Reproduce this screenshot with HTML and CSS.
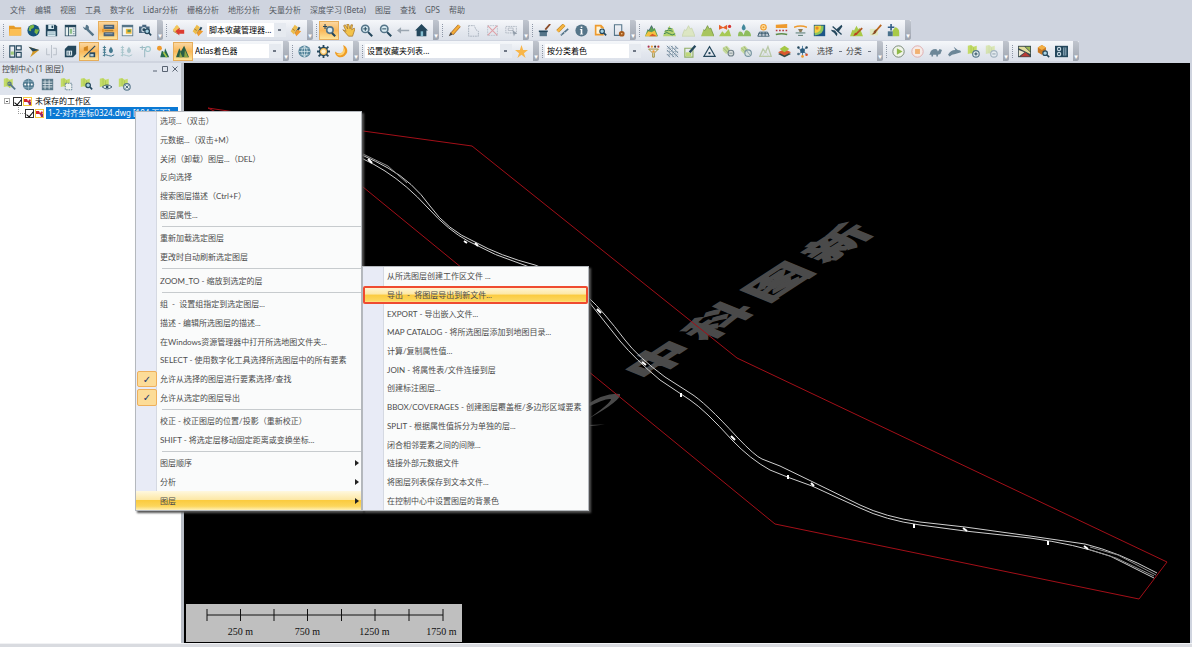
FILE: index.html
```html
<!DOCTYPE html>
<html lang="zh-CN">
<head>
    <meta charset="UTF-8">
    <meta name="viewport" content="width=device-width, initial-scale=1.0">
    <title>控制中心</title>
    <link rel="stylesheet" href="styles.css">
</head>
<body>
    <nav class="menubar">
        <button>文件</button>
        <button>编辑</button>
        <button>视图</button>
        <button>工具</button>
        <button>数字化</button>
        <button>Lidar分析</button>
        <button>栅格分析</button>
        <button>地形分析</button>
        <button>矢量分析</button>
        <button>深度学习 (Beta)</button>
        <button>图层</button>
        <button>查找</button>
        <button>GPS</button>
        <button>帮助</button>
    </nav>

    <div class="toolbar-row">
        <div class="toolbar bar-file" data-icons="folder globe save layout wrench layers:on window camera"></div>
        <div class="toolbar bar-script">
            <span class="tools" data-icons="scriptRun scriptEdit"></span>
            <select class="combo" aria-label="脚本"><option>脚本收藏管理器...</option></select>
            <span class="tools one" data-icons="scriptEdit"></span>
        </div>
        <div class="toolbar bar-view" data-icons="zoomTool:on hand zoomIn zoomOut back home"></div>
        <div class="toolbar bar-edit" data-icons="pencil selectShape deleteX selectBox"></div>
        <div class="toolbar bar-info" data-icons="brushCan ruler info pageFind pageGear"></div>
        <div class="toolbar bar-terrain" data-icons="terrainColor terrainLine terrainPale terrainGreen terrainFlag terrainWater sunGrid bandOrange plateau heatmap plane terrainBrush brush terrainAdd"></div>
    </div>

    <div class="toolbar-row">
        <div class="toolbar bar-shader">
            <span class="tools" data-icons="panes compass mirror cube percent:on wellBlue wellPale wellTop terrainSun terrainDark:on"></span>
            <select class="combo" aria-label="着色器"><option>Atlas着色器</option></select>
        </div>
        <div class="toolbar bar-globe" data-icons="gridGlobe gearSun moon"></div>
        <div class="toolbar bar-favorite">
            <select class="combo" aria-label="收藏夹"><option>设置收藏夹列表...</option></select>
            <span class="tools one" data-icons="star"></span>
        </div>
        <div class="toolbar bar-lidar">
            <select class="combo" aria-label="着色"><option>按分类着色</option></select>
            <span class="tools" data-icons="filter hatch picker triangle cloudA cloudB cloudC diamond points"></span>
            <button class="drop">选择</button>
            <button class="drop">分类</button>
        </div>
        <div class="toolbar bar-play" data-icons="play stop turtle rabbit mapAdd mapMinus"></div>
        <div class="toolbar bar-extra" data-icons="mosaic cubeFind switches"></div>
    </div>

    <main class="workspace">
        <aside class="control-center">
            <header class="panel-title">
                <h1>控制中心 (1 图层)</h1>
                <button aria-label="最小化"><svg viewBox="0 0 8 8"><path d="M2 6h4"/></svg></button>
                <button aria-label="最大化"><svg viewBox="0 0 8 8"><path d="M1.500 1.500h5v5h-5z"/></svg></button>
                <button aria-label="关闭"><svg viewBox="0 0 8 8"><path d="M1.500 1.500l5 5M6.500 1.500l-5 5"/></svg></button>
            </header>
            <div class="panel-tools" data-icons="mapWrench dotsGlobe table mapSelect mapFind mapEye mapClose"></div>
            <div class="tree">
                <div class="tree-row root">
                    <span class="expander"></span>
                    <input type="checkbox" id="workspace" checked>
                    <svg class="layer-icon" viewBox="0 0 9 9"><path fill="#f4c93c" d="M0 0h9v9H0z"/><path fill="#fff" d="M1 1h7v7H1z"/><path fill="#d3222f" d="M1 2h3l1 2 2-2 1 2-2 2-2-1-3 0z"/><path fill="#8b2a70" d="M5 5h3v3H6z"/></svg>
                    <label for="workspace">未保存的工作区</label>
                </div>
                <div class="tree-row child">
                    <input type="checkbox" id="layer" checked>
                    <svg class="layer-icon" viewBox="0 0 9 9"><path fill="#f4c93c" d="M0 0h9v9H0z"/><path fill="#fff" d="M1 1h7v7H1z"/><path fill="#d3222f" d="M1 2h3l1 2 2-2 1 2-2 2-2-1-3 0z"/><path fill="#8b2a70" d="M5 5h3v3H6z"/></svg>
                    <label for="layer" class="selected">1-2-对齐坐标0324.dwg [184 页面]</label>
                </div>
            </div>
        </aside>

        <section class="map">
            <svg class="drawing" viewBox="184 63 1006 580" preserveAspectRatio="xMinYMin slice">
                <!-- watermark -->
                <g class="watermark">
                    <path d="M586 405Q606 392 620 394Q622 400 588 419Q611 403 611 399Q605 398 586 408z"/>
                    <path d="M586 425l19-.5-19 2z"/>
                    <text transform="matrix(1.15 -.75 .78 .32 671 365)" x="0 52 104 156">中科图新</text>
                </g>
                <!-- boundary -->
                <path class="boundary" d="M208 108L363 131 472 146 737 358 1167 562 1139 599 775 524 363 187z"/>
                <!-- route -->
                <g class="route">
                    <path d="M340 147Q363 154 388 168T430 206 475 242Q500 256 535 265 565 275 589 298 603 311 625 340 638 357 665 377L690 393Q705 402 737 437 755 456 762 459L780 466 813 482 860 505Q885 517 920 522L965 527 1030 536 1085 544Q1118 552 1157 573"/>
                    <path d="M340 150Q363 157 385 171T428 208 468 241Q495 256 524 265 562 277 589 302L620 341Q636 360 660 380L690 400Q705 410 732 440 750 459 770 470L790 478 812 486 860 508Q885 520 920 525L965 531 1030 538Q1075 544 1110 556L1154 578"/>
                    <path class="fine" d="M363 154L388 166 407 183M1090 547l28 8 38 20M1090 550l26 8 38 18"/>
                </g>
                <path class="stations" d="M368 159l4 4M464 241l3 2M475 243l3 3M597 309l4 4M642 362l4 3M681 393v4M731 436l4 4M788 475v4M811 483l3 3M914 524v4M963 528l4 3M1048 541v4M1084 546l4 3"/>
            </svg>

            <div class="scale">
                <svg viewBox="0 0 276 22"><path d="M23 11h236M23 5v12M56.500 5v12M90 5v12M123.500 5v12M157.500 5v12M191 5v12M225 5v12M259 5v12" transform="translate(-2)"/></svg>
                <div class="scale-labels">
                    <span>250 m</span>
                    <span>750 m</span>
                    <span>1250 m</span>
                    <span>1750 m</span>
                </div>
            </div>
        </section>
    </main>
    <footer class="statusbar"></footer>

    <div class="menu context-menu">
        <button>选项...（双击）</button>
        <button>元数据...（双击+M）</button>
        <button>关闭（卸载）图层...（DEL）</button>
        <button>反向选择</button>
        <button>搜索图层描述（Ctrl+F）</button>
        <button>图层属性...</button>
        <hr>
        <button>重新加载选定图层</button>
        <button>更改时自动刷新选定图层</button>
        <hr>
        <button>ZOOM_TO - 缩放到选定的层</button>
        <hr>
        <button>组  -  设置组指定到选定图层...</button>
        <button>描述 - 编辑所选图层的描述...</button>
        <button>在Windows资源管理器中打开所选地图文件夹...</button>
        <button>SELECT - 使用数字化工具选择所选图层中的所有要素</button>
        <button class="checked">允许从选择的图层进行要素选择/查找</button>
        <button class="checked">允许从选定的图层导出</button>
        <hr>
        <button>校正 - 校正图层的位置/投影（重新校正）</button>
        <button>SHIFT - 将选定层移动固定距离或变换坐标...</button>
        <hr>
        <button class="has-submenu">图层顺序</button>
        <button class="has-submenu">分析</button>
        <button class="has-submenu active">图层</button>
    </div>

    <div class="menu submenu">
        <button>从所选图层创建工作区文件 ...</button>
        <button class="active outlined">导出  -  将图层导出到新文件...</button>
        <button>EXPORT - 导出嵌入文件...</button>
        <button>MAP CATALOG - 将所选图层添加到地图目录...</button>
        <button>计算/复制属性值...</button>
        <button>JOIN - 将属性表/文件连接到层</button>
        <button>创建标注图层...</button>
        <button>BBOX/COVERAGES - 创建图层覆盖框/多边形区域要素</button>
        <button>SPLIT - 根据属性值拆分为单独的层...</button>
        <button>闭合相邻要素之间的间隙...</button>
        <button>链接外部元数据文件</button>
        <button>将图层列表保存到文本文件...</button>
        <button>在控制中心中设置图层的背景色</button>
    </div>

    <script src="icons.js"></script>
</body>
</html>
```
FILE: styles.css
```css
* {
    box-sizing: border-box;
}
body {
    margin: 0;
    height: 100vh;
    display: flex;
    flex-direction: column;
    overflow: hidden;
    background: #cfd4df;
    color: #444;
    font: 8px/12px "Noto Sans", "Noto Sans CJK SC", sans-serif;
}
button, select {
    margin: 0;
    padding: 0;
    border: none;
    background: none;
    color: inherit;
    font: inherit;
}
svg {
    display: block;
}

/* menu bar and toolbars */
.menubar {
    display: flex;
    gap: 9px;
    height: 19px;
    margin-bottom: 1px;
    padding: 0 10px;
    color: #555a63;
}
.menubar button {
    white-space: nowrap;
}
.toolbar-row {
    display: flex;
    height: 21px;
}
.toolbar {
    position: relative;
    display: flex;
    align-items: center;
    height: 20px;
    padding: 0 8px 0 6px;
    background: linear-gradient(#f5f7fa, #e3e7ee 60%, #dce1ea);
}
.toolbar::before {
    content: "";
    position: absolute;
    left: 3px;
    top: 4px;
    bottom: 3px;
    border-left: 1px dotted #8e97a6;
}
.toolbar::after {
    content: "▾";
    position: absolute;
    right: 0;
    top: 0;
    bottom: 0;
    width: 6px;
    border-radius: 0 2px 2px 0;
    background: linear-gradient(#c0c5ce, #9ea5b0);
    color: #fff;
    font: 7px/32px "DejaVu Sans", sans-serif;
    text-align: center;
}
.tools {
    display: flex;
    flex: 1;
}
.tools.one {
    flex: 0 0 19px;
}
.tool {
    display: flex;
    flex: 1;
    align-items: center;
    justify-content: center;
    height: 19px;
}
.tool svg {
    width: 13px;
    height: 13px;
}
.tool.on {
    border: 1px solid #e6ae5c;
    background: linear-gradient(#fbd7a0, #f9b85a 50%, #fde49a);
}
.combo {
    appearance: none;
    flex: 1;
    min-width: 0;
    height: 14px;
    padding: 0 2px;
    background: linear-gradient(#6f7785, #6f7785) right 5px center / 3px 2px no-repeat,
        linear-gradient(#e6eaf0, #e6eaf0) right / 12px 100% no-repeat, #fff;
    color: #000;
}
.drop {
    width: 29px;
    text-align: left;
    white-space: nowrap;
    background: linear-gradient(#6f7785, #6f7785) right 4px center / 3px 1px no-repeat;
}
.bar-file { width: 163px; }
.bar-script { width: 150px; }
.bar-script .tools:first-child { flex: 0 0 38px; }
.bar-view { width: 126px; }
.bar-edit { width: 90px; }
.bar-info { width: 107px; }
.bar-terrain { width: 275px; }
.bar-shader { width: 289px; }
.bar-shader .tools { flex: 0 0 187px; }
.bar-globe { width: 70px; }
.bar-favorite { width: 180px; }
.bar-lidar { width: 344px; }
.bar-lidar .combo { margin-right: 3px; }
.bar-lidar .tools { flex: 0 0 168px; }
.bar-lidar .drop:first-of-type { margin-left: 5px; }
.bar-play { width: 126px; }
.bar-extra { width: 70px; }

/* control center */
.workspace {
    display: flex;
    flex: 1;
    min-height: 0;
    padding: 1px 2px 0 0;
}
.control-center {
    display: flex;
    flex-direction: column;
    width: 184px;
    border-right: 3px solid #b9bec6;
    background: #dfe4ed;
}
.panel-title {
    display: flex;
    align-items: center;
    height: 11px;
    padding: 0 2px;
    gap: 2px;
}
.panel-title h1 {
    flex: 1;
    margin: 0;
    font-size: 8px;
    font-weight: normal;
}
.panel-title svg {
    width: 8px;
    height: 8px;
    fill: none;
    stroke: #596372;
    stroke-width: 1;
}
.panel-tools {
    display: flex;
    width: 134px;
    height: 21px;
    align-items: center;
}
.tree {
    flex: 1;
    background: #fff;
    color: #000;
    overflow: hidden;
}
.tree-row {
    display: flex;
    align-items: center;
    height: 12px;
    gap: 1px;
    white-space: nowrap;
}
.root {
    padding-left: 4px;
}
.child {
    position: relative;
    padding-left: 25px;
}
.child::before {
    content: "";
    position: absolute;
    left: 18px;
    top: 0;
    width: 6px;
    height: 6px;
    border-left: 1px dotted #999;
    border-bottom: 1px dotted #999;
}
.expander {
    width: 6px;
    height: 6px;
    margin-right: 2px;
    border: 1px solid #aaa;
    background: linear-gradient(#555, #555) center / 2px 1px no-repeat;
}
.tree input {
    appearance: none;
    display: grid;
    place-items: center;
    width: 9px;
    height: 9px;
    margin: 0;
    border: 1px solid #333;
}
.tree input:checked::after {
    content: "";
    width: 3px;
    height: 6px;
    border: solid #000;
    border-width: 0 1px 1px 0;
    rotate: 40deg;
}
.layer-icon {
    width: 9px;
    height: 9px;
}
.tree label {
    padding: 0 2px;
}
.tree .selected {
    flex: 1;
    margin: 0 3px 0 1px;
    background: #0b79d4;
    color: #fff;
}

/* map */
.map {
    position: relative;
    flex: 1;
    background: #000;
}
.drawing {
    position: absolute;
    width: 100%;
    height: 100%;
    fill: none;
}
.watermark {
    fill: #4a4a4a;
    font: bold 44px "Noto Sans CJK SC", sans-serif;
    text-anchor: middle;
}
.watermark text {
    stroke: #4a4a4a;
    stroke-width: 2;
}
.boundary {
    stroke: #a30f18;
}
.route {
    stroke: #cfcfcf;
}
.fine {
    stroke: #8d8d8d;
}
.stations {
    stroke: #fff;
    stroke-width: 2;
}
.scale {
    position: absolute;
    left: 2px;
    bottom: 1px;
    width: 276px;
    padding-bottom: 4px;
    background: #bfbfbf;
    color: #111;
    font: 10px/12px "Liberation Serif", serif;
}
.scale svg {
    width: 276px;
    height: 22px;
    stroke: #111;
    stroke-width: 1;
}
.scale-labels {
    display: grid;
    grid-template-columns: repeat(4, 67px);
    margin-left: 21px;
    text-align: center;
}
.statusbar {
    height: 4px;
    border-top: 1px solid #f1f2f4;
    background: #d9dbe0;
}

/* popup menus */
.menu {
    position: absolute;
    display: flex;
    flex-direction: column;
    width: 227px;
    border: 1px solid #b4b8bd;
    background: linear-gradient(90deg, #e8ebf6 20px, #d5d9e2 20px, #d5d9e2 21px, #fafbfb 21px);
    box-shadow: 2px 2px 2px #555;
    color: #4c4c4c;
    font-family: Lato, "Noto Sans CJK SC", sans-serif;
}
.menu button {
    position: relative;
    flex: 1;
    min-height: 0;
    padding-left: 24px;
    text-align: left;
    white-space: pre;
}
.menu hr {
    height: 1px;
    margin: 2px 0 2px 26px;
    border: none;
    background: #c7cbce;
}
.menu .active {
    background: linear-gradient(#fff8df, #fde8a6 45%, #fbcb3f 50%, #fcd65c 80%, #fff0b8);
}
.context-menu {
    left: 135px;
    top: 111px;
    height: 400px;
}
.submenu {
    left: 362px;
    top: 266px;
    height: 245px;
}
.menu .outlined {
    border-radius: 2px;
    outline: 2px solid #ef4b30;
    outline-offset: -2px;
}
.checked::before {
    content: "✓";
    position: absolute;
    left: 1px;
    top: 1px;
    bottom: 1px;
    width: 18px;
    border: 1px solid #eeb05c;
    border-radius: 2px;
    background: #fcdc98;
    color: #23376b;
    font: bold 10px/15px "DejaVu Sans", sans-serif;
    text-align: center;
}
.has-submenu::after {
    content: "";
    position: absolute;
    right: 2px;
    top: 50%;
    margin-top: -3px;
    border: 3px solid transparent;
    border-left: 4px solid #222;
    border-right: none;
}
```
FILE: icons.js
```js
const NAVY = '#24475c';
const SLATE = '#557589';
const ORANGE = '#ee9a2d';
const GREEN = '#a9ca48';

const fill = (color, d) => `<path fill="${color}" d="${d}"/>`;
const line = (color, d, width = 1.2) => `<path fill="none" stroke="${color}" stroke-width="${width}" d="${d}"/>`;
const dot = (color, x, y, r) => `<circle fill="${color}" cx="${x}" cy="${y}" r="${r}"/>`;
const ring = (color, x, y, r, inside = 'none', width = 1.4) => `<circle fill="${inside}" stroke="${color}" stroke-width="${width}" cx="${x}" cy="${y}" r="${r}"/>`;

const hills = 'M0 15L3 7l2 1 3-6 2 4 2-1 4 10z';
const mapSheet = fill('#c3db68', 'M1 1l4-1 3 2 4-1v10l-4 1-3-2-4 1z') + line('#a5c24c', 'M5 1v9M8 3v9', .8);
const lens = (x, y) => ring(NAVY, x, y, 2.8, '#a9d3e4') + line(NAVY, `M${x + 2} ${y + 2}l3 3`, 2);
const brushStroke = line('#b8651d', 'M15 1L9 8', 2.2) + fill(NAVY, 'M10 7q-1 6-7 6 3-1 3-4 2-3 4-2z');
const magnifier = ring(SLATE, 6.5, 6, 4.5, '#d8eaf1', 2) + line(NAVY, 'M10 10l5 5', 2.6);
const cloud = fill('#c5d99b', 'M1 3l5-2 3 3 1 5-5 2-4-4z') + line('#87a65d', 'M2 4l6 6M5 2l4 6', .8);
const well = (color) => line(color, 'M3 1v13M1 3h4M1 6h4M1 9h4M1 13q4-2 7 0t7-1', 1.2) + fill(color, 'M11 2q5 6 0 8-5-2 0-8z');

const icons = {
    folder: fill('#e69b27', 'M0 2h6l2 2h7v10H0z') + fill('#fbbf55', 'M1 6h14v8H0z'),
    globe: dot('#15537a', 8, 8, 7.5) + fill('#7eb843', 'M3 3q4-3 6-1l-1 3-3 1v3L2 8zM10 6l5 1-3 6-3-3z'),
    save: fill(NAVY, 'M1 1h12l2 2v12H1z') + fill('#d9ecf2', 'M4 1h7v5H4zM3 9h10v6H3z') + fill(NAVY, 'M8 2h2v3H8z') + line('#89a6b4', 'M4 11h8M4 13h8', 1),
    layout: fill(NAVY, 'M1 1h14v14H1z') + fill('#e7f0f0', 'M2 4h3v10H2zM6 4h8v10H6z') + fill('#8fc08b', 'M7 6h3v6H7z') + line(SLATE, 'M11 6h2M11 9h2M11 12h2', 1),
    wrench: line(SLATE, 'M5 5l9 9', 3) + fill(SLATE, 'M1 3l3 2 1-4q5 1 3 6-5 2-7-4z'),
    layers: fill('#49637a', 'M2 1h13v5H2zM2 10h13v5H2z') + fill('#b9832f', 'M3 7h11v2H3z') + line('#a7b9c4', 'M4 3h9M4 12h9', 1) + fill(ORANGE, 'M0 6h3v4H0z'),
    window: fill(SLATE, 'M1 1h14v14H1z') + fill('#f3f5ee', 'M2 4h12v10H2z') + fill('#f0ba39', 'M6 6h7v6H6z') + fill('#5b915f', 'M8 7h4v3H8z'),
    camera: fill('#496780', 'M0 3h4V1h5v2h4v8H0z') + ring('#cbd9e1', 6, 7, 2.5, NAVY) + lens(10, 9),
    scriptRun: line('#a87a24', 'M5 3L2 9l5 3 2-7z') + fill('#f3c75c', 'M6 1l3 3-4 7-4-4z') + fill('#dc3c31', 'M4 9l5-4v2h6v5H9v2z'),
    scriptEdit: fill('#edbd4c', 'M7 1l4 3-5 9-4-4z') + line('#986d27', 'M4 6l3 2', 1) + line(NAVY, 'M13 4l-5 8', 2.4) + fill(ORANGE, 'M10 7l5 2-6 6-2-4z'),
    zoomTool: ring(SLATE, 8.5, 7.5, 4, '#d8eaf1', 2) + line(NAVY, 'M11 11l4 4', 2.6) + line(NAVY, 'M0 3h5M2.500 0v6', 1.3),
    hand: fill('#f3c34b', 'M1 7l4 2-3-7 2-1 3 5-1-6h2l2 6 1-5h2l-1 6 3-2 1 1-3 9H8z') + line('#9a6b24', 'M1 7l4 2-3-7 2-1 3 5-1-6h2l2 6 1-5h2l-1 6 3-2 1 1-3 9H8z', .8),
    zoomIn: magnifier + line(NAVY, 'M4 6h5M6.500 3.500v5'),
    zoomOut: magnifier + line(NAVY, 'M4 6h5'),
    back: fill('#9ba6b1', 'M0 8l5-4v3h10v2H5v3z'),
    home: fill(NAVY, 'M8 0l8 8h-2v7H2V8H0z') + fill('#83bdd0', 'M7 9h3v6H7z'),
    pencil: line('#a46524', 'M14 2L5 12', 4.5) + line('#f4ad38', 'M14 2L5 12', 3) + fill('#51483c', 'M1 15l2-5 3 3z'),
    selectShape: `<path fill="none" stroke="#9aa5b1" stroke-dasharray="2 1" d="M2 2h7l2 5 3 2v6H2z"/>`,
    deleteX: `<path fill="none" stroke="#b3bcc7" stroke-dasharray="2 1" d="M2 2h12v12H2z"/>` + line('#dfa1a7', 'M2 2l12 12M14 2L2 14', 1.4),
    selectBox: `<path fill="none" stroke="#a5aeb9" stroke-dasharray="2 1" d="M1 3h13v8H1z"/>` + line('#a2aab5', 'M4 5h6v3H4z', .8) + fill('#929daa', 'M9 7l6 5-3 .5-1 3z'),
    brushCan: fill(SLATE, 'M2 9h9v6H2z') + fill(NAVY, 'M1 8h11v2H1z') + line('#8b4b29', 'M15 0L9 7', 2.2),
    ruler: line('#bc8428', 'M2 9l8-8', 4.5) + line('#f5b440', 'M2 9l8-8', 3) + line(SLATE, 'M6 14l9-8', 2) + line('#fff', 'M7 13l1 1M10 10l1 1', .8),
    info: dot(SLATE, 8, 8, 7.5) + fill('#fff', 'M7 3h2v2H7zM6 6h3v6h1v1H6v-1h1V7H6z'),
    pageFind: fill(ORANGE, 'M1 1h8l3 3v10H1z') + fill('#fff4d8', 'M3 3h5v2h3v7H3z') + lens(10, 9),
    pageGear: line(SLATE, 'M3 1h9v13H3z', 1.3) + dot('#a75b1c', 12, 12, 3.5) + dot('#f5d09b', 12, 12, 1),
    terrainColor: fill('#5b9f51', hills) + fill('#f3c13f', 'M0 15l4-6 4 1 4-2 3 7z') + fill('#d95b28', 'M5 15l4-3 6 3z') + line(NAVY, 'M3 7l2 1 3-6 2 4', .8),
    terrainLine: fill('#b4d36e', hills) + line('#24734d', 'M1 12q4-3 7 0t7 0M2 9q5-3 10 0M6 5l5 1', 1),
    terrainPale: fill('#dce6c3', hills) + line('#c3d1a4', 'M0 15l3-8 2 1 3-6 2 4 2-1 4 10z', .8),
    terrainGreen: fill('#a8c55e', hills) + line('#6f8e39', 'M3 7l2 1 3-6 2 4 2-1 4 10', .9),
    terrainFlag: fill('#a7c956', 'M0 15l4-6 3 3 5-6 3 9z') + fill('#e7612a', 'M0 1l5 3 5-3v6L5 5 0 7z') + dot('#d43131', 13, 3, 2),
    terrainWater: fill('#8ebd5d', 'M0 15q0-8 5-5 3 5 3 5zM7 15q1-9 5-7 4 2 4 7z') + fill('#42889c', 'M7 0q5 6 0 8-5-2 0-8z'),
    sunGrid: dot(ORANGE, 8, 4, 4) + ring('#fde0a0', 8, 4, 2) + line(NAVY, 'M3 10h10l2 5H1zM6 10v5M10 10v5M2 12h12', 1),
    bandOrange: fill(ORANGE, 'M1 1l14-1v5H1z') + `<path fill="none" stroke="#b6383c" stroke-width="2" stroke-dasharray="2 2" d="M1 8h14"/>` + line('#5e8c4a', 'M1 13q7-2 14 0', 2),
    plateau: line(ORANGE, 'M0 4q8-3 16 0', 2) + fill('#8b7b58', 'M5 6h6l-2 4H7z') + line('#51766c', 'M2 11h12M5 14h6'),
    heatmap: fill('#1c5689', 'M1 1h14v14H1z') + fill('#8dc75f', 'M2 2h11q1 11-11 12z') + fill('#f4d241', 'M2 2h8q0 9-8 9z') + dot('#e68a2c', 5, 5, 2),
    plane: line(NAVY, 'M2 3l11 10', 1.6) + fill(NAVY, 'M6 7l7-6 1 2-5 7zM5 8L0 7l1 2 3 2 3 4 1-3z'),
    terrainBrush: fill(GREEN, hills) + line('#af5921', 'M15 5l-6 6', 2.2) + fill('#bd3d22', 'M10 10l-1 3-5 2 2-4z'),
    brush: fill('#e0e8bd', 'M1 6h10v8H1z') + line('#b8651d', 'M15 1L9 8', 2.2) + fill('#8a4a22', 'M10 7q-1 6-7 6 3-1 3-4 2-3 4-2z'),
    terrainAdd: fill(GREEN, 'M7 15V8l3-4q5 1 5 6v5z') + line('#335e87', 'M5 0v8M1 4h8', 2) + fill('#49718c', 'M1 9h6v6H1z'),

    panes: line(NAVY, 'M1 1h6v14H1zM9 1h6v5H9zM9 9h6v6H9z', 1.4) + fill('#9fc87c', 'M2 8h4v4H2z'),
    compass: fill('#d39927', 'M2 2l13 4-11 9 3-7z') + fill(NAVY, 'M2 2l13 4-8 2z'),
    mirror: line('#b2b9c3', 'M8 0v16M2 4v8h4M10 4h4v8h-4', 1),
    cube: fill(NAVY, 'M1 5l4-4h10v10l-4 4H1z') + fill('#dae7ed', 'M3 7h7v6H3z') + line(NAVY, 'M5 8v4M8 8v4', 1),
    percent: line(NAVY, 'M1 15L15 1', 1.4) + fill('#cf8420', 'M1 3l5-2v6H1z') + fill(NAVY, 'M8 9h7v6H8z') + fill('#b5ccd4', 'M9 11h4v3H9z'),
    wellBlue: well('#44798f'),
    wellPale: well('#a9c5cc'),
    wellTop: line('#9cbac3', 'M7 5v10M1 3h7M4 1v5', 1.3) + ring('#9cc5ca', 11, 5, 3),
    terrainSun: dot(ORANGE, 3, 4, 3) + fill('#24684e', 'M4 15l2-8 3 2 1-5 5 11z') + line('#a9ca48', 'M8 9l4 6', 2),
    terrainDark: fill('#285d45', 'M0 15L4 4l2 4 4-7 6 14z') + fill('#8aa442', 'M4 15l1-7 3 7zM10 15l1-9 4 9z'),
    gridGlobe: dot('#54849b', 8, 8, 7.5) + line('#e2eff3', 'M1 8h14M8 1v14M3 4h10M3 12h10M8 1Q1 8 8 15Q15 8 8 1', .8),
    gearSun: line(NAVY, 'M8 0v16M0 8h16M2 2l12 12M14 2L2 14', 2.2) + ring(NAVY, 8, 8, 5, '#f8bb52') + dot('#fff1cb', 8, 8, 2.8),
    moon: fill('#ee9d25', 'M10 0q6 3 5 9-3 7-10 6-5-2-5-7 6 5 10 0 2-4 0-8z') + fill('#ffd374', 'M11 3q4 7-4 10-3 0-5-2 6 0 8-4z'),
    star: fill('#f8b64a', 'M8 0l2 6h6l-5 4 2 6-5-4-5 4 2-6-5-4h6z'),
    filter: dot('#ad2f4c', 2, 2, 1.3) + dot(ORANGE, 6, 2, 1.3) + dot('#40352c', 10, 2, 1.3) + dot('#b83736', 14, 2, 1.3) + line('#a49139', 'M2 5h12L9 10v5H7v-5z') + dot(ORANGE, 8, 8, 1.5),
    hatch: line('#57748a', 'M1 1l14 14M6 1l9 9M11 1l4 4M1 6l9 9M1 11l4 4', 1) + line('#93a6b4', 'M1 4h14M1 8h14M1 12h14M4 1v14M8 1v14M12 1v14', .8),
    picker: line('#90af62', 'M1 4h10v11H1z', 1.4) + fill('#bfd879', 'M2 9h7v5H2z') + line(NAVY, 'M14 1L7 9', 2.8),
    triangle: line(NAVY, 'M8 2l7 12H1z', 1.4) + dot(NAVY, 8, 10, 1.4),
    cloudA: cloud + ring('#71818a', 11, 10, 3.5, '#dbe0dd') + line('#71818a', 'M9 10h4', 1),
    cloudB: cloud + ring('#7794a1', 10, 10, 4, '#d8e3df') + line('#7794a1', 'M8 7l5 6', 1),
    cloudC: line('#b8c8a6', 'M1 14l4-9 3 4 3-7 4 12z', 1.6) + line('#c7d3bb', 'M4 14l4-7 4 7', 1),
    diamond: fill('#344d45', 'M8 7l8 4-8 4-8-4z') + fill('#d8582d', 'M8 5l8 4-8 4-8-4z') + fill('#a4c744', 'M8 1l6 4-6 4-6-4z'),
    points: line('#386b91', 'M3 4l10 7M13 3L4 11M8 1v13', 1) + dot('#285a7b', 8, 7, 3) + dot(NAVY, 3, 3, 1.5) + dot(NAVY, 13, 3, 1.5) + dot(ORANGE, 8, 14, 1.6) + dot('#d8532e', 13, 12, 1.6) + dot(SLATE, 3, 11, 1.6),
    play: ring('#6f806d', 8, 8, 7, '#f0f4ea', 1.1) + fill('#8eb948', 'M6 4l7 4-7 4z'),
    stop: ring('#dda7a9', 8, 8, 7, '#f5ebe8', 1.1) + fill('#f1b171', 'M5 5h6v6H5z'),
    turtle: fill('#6d8798', 'M1 11q1-6 7-6 2 0 3 3l2-3 3 1-2 5-3 1v2H9v-2H5v2H3v-2H0z'),
    rabbit: fill('#6d8798', 'M0 12q3-6 9-6L7 2l5 4q4 0 4 3l-4 1-3 1-4 1-3 2z'),
    mapAdd: mapSheet + ring(SLATE, 11, 11, 4, '#e5eff0') + line(NAVY, 'M9 11h4M11 9v4'),
    mapMinus: `<g opacity=".45">${mapSheet}${ring(SLATE, 11, 11, 4, '#e5eff0')}${line(NAVY, 'M9 11h4')}</g>`,
    mosaic: fill('#38494e', 'M0 1h16v14H0z') + fill('#e0dc9c', 'M1 2h7l7 7v2L1 4z') + fill('#9bb84f', 'M9 2h6v6z') + fill('#b83c35', 'M15 14H3l6-5z') + fill('#ece7cc', 'M1 14V6l7 3z'),
    cubeFind: fill('#c97721', 'M1 3l5-3 5 3v6l-5 3-5-3z') + fill('#f3af45', 'M1 3l5-3 5 3-5 3z') + lens(10, 10),
    switches: fill(NAVY, 'M0 1h16v14H0z') + ring('#c9dbe5', 5, 5, 2) + ring('#c9dbe5', 5, 11, 2) + fill('#88a6b8', 'M10 3h4v10h-4z') + line(NAVY, 'M12 3v10', 1),

    mapWrench: mapSheet + line(SLATE, 'M8 7l7 7', 2.2) + ring(SLATE, 8, 7, 2),
    dotsGlobe: dot('#537c91', 8, 8, 7) + line('#9ebdca', 'M2 4h12M2 12h12M8 1v14', .8) + dot('#fff', 4, 8, 1.2) + dot('#fff', 8, 8, 1.2) + dot('#fff', 12, 8, 1.2),
    table: fill('#597888', 'M1 1h14v14H1z') + line('#e0e9ec', 'M2 5h12M2 8h12M2 11h12M5 2v12M10 2v12', 1),
    mapSelect: mapSheet + `<path fill="#eef2f1" stroke="${SLATE}" stroke-dasharray="2 1" d="M6.500 6.500h8v8h-8z"/>`,
    mapFind: mapSheet + lens(10, 9),
    mapEye: mapSheet + fill('#e5eff0', 'M4 11q6-5 12 0-6 6-12 0z') + line(NAVY, 'M4 11q6-5 12 0-6 5-12 0z', 1) + dot(NAVY, 10, 11, 1.7),
    mapClose: mapSheet + ring(SLATE, 11, 11, 4, '#e5eff0') + line(NAVY, 'M9 9l4 4M13 9l-4 4', 1)
};

// "name:on" marks a pressed tool
document.querySelectorAll('[data-icons]').forEach(bar => {
    let holder = bar;
    if (bar.classList.contains('toolbar')) {
        holder = document.createElement('span');
        holder.className = 'tools';
        bar.appendChild(holder);
    }
    bar.dataset.icons.split(' ').forEach(entry => {
        const [name, state] = entry.split(':');
        const button = document.createElement('button');
        button.className = state ? 'tool on' : 'tool';
        button.setAttribute('aria-label', name);
        button.innerHTML = `<svg viewBox="0 0 16 16">${icons[name]}</svg>`;
        holder.appendChild(button);
    });
});
```
